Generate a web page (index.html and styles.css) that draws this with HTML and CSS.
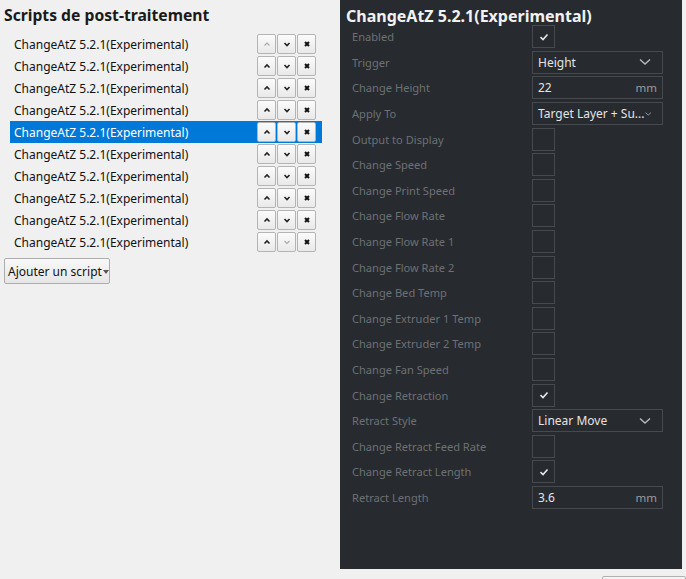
FILE: index.html
```html
<!DOCTYPE html>
<html>
<head>
<meta charset="utf-8">
<link rel="stylesheet" href="styles.css">
</head>
<body>
<div class="app">
  <section class="left">
    <h1 class="ltitle">Scripts de post-traitement</h1>
    <ul class="list">
      <li class="item"><span class="name">ChangeAtZ 5.2.1(Experimental)</span><span class="btns"><button class="b dis"><svg viewBox="0 0 10 10"><path d="M2.5 6.5 L5 4 L7.5 6.5"/></svg></button><button class="b"><svg viewBox="0 0 10 10"><path d="M2.5 4 L5 6.5 L7.5 4"/></svg></button><button class="b x"><svg viewBox="0 0 10 10"><path d="M3 3 L7 7 M7 3 L3 7"/></svg></button></span></li>
      <li class="item"><span class="name">ChangeAtZ 5.2.1(Experimental)</span><span class="btns"><button class="b"><svg viewBox="0 0 10 10"><path d="M2.5 6.5 L5 4 L7.5 6.5"/></svg></button><button class="b"><svg viewBox="0 0 10 10"><path d="M2.5 4 L5 6.5 L7.5 4"/></svg></button><button class="b x"><svg viewBox="0 0 10 10"><path d="M3 3 L7 7 M7 3 L3 7"/></svg></button></span></li>
      <li class="item"><span class="name">ChangeAtZ 5.2.1(Experimental)</span><span class="btns"><button class="b"><svg viewBox="0 0 10 10"><path d="M2.5 6.5 L5 4 L7.5 6.5"/></svg></button><button class="b"><svg viewBox="0 0 10 10"><path d="M2.5 4 L5 6.5 L7.5 4"/></svg></button><button class="b x"><svg viewBox="0 0 10 10"><path d="M3 3 L7 7 M7 3 L3 7"/></svg></button></span></li>
      <li class="item"><span class="name">ChangeAtZ 5.2.1(Experimental)</span><span class="btns"><button class="b"><svg viewBox="0 0 10 10"><path d="M2.5 6.5 L5 4 L7.5 6.5"/></svg></button><button class="b"><svg viewBox="0 0 10 10"><path d="M2.5 4 L5 6.5 L7.5 4"/></svg></button><button class="b x"><svg viewBox="0 0 10 10"><path d="M3 3 L7 7 M7 3 L3 7"/></svg></button></span></li>
      <li class="item sel"><span class="name">ChangeAtZ 5.2.1(Experimental)</span><span class="btns"><button class="b"><svg viewBox="0 0 10 10"><path d="M2.5 6.5 L5 4 L7.5 6.5"/></svg></button><button class="b"><svg viewBox="0 0 10 10"><path d="M2.5 4 L5 6.5 L7.5 4"/></svg></button><button class="b x"><svg viewBox="0 0 10 10"><path d="M3 3 L7 7 M7 3 L3 7"/></svg></button></span></li>
      <li class="item"><span class="name">ChangeAtZ 5.2.1(Experimental)</span><span class="btns"><button class="b"><svg viewBox="0 0 10 10"><path d="M2.5 6.5 L5 4 L7.5 6.5"/></svg></button><button class="b"><svg viewBox="0 0 10 10"><path d="M2.5 4 L5 6.5 L7.5 4"/></svg></button><button class="b x"><svg viewBox="0 0 10 10"><path d="M3 3 L7 7 M7 3 L3 7"/></svg></button></span></li>
      <li class="item"><span class="name">ChangeAtZ 5.2.1(Experimental)</span><span class="btns"><button class="b"><svg viewBox="0 0 10 10"><path d="M2.5 6.5 L5 4 L7.5 6.5"/></svg></button><button class="b"><svg viewBox="0 0 10 10"><path d="M2.5 4 L5 6.5 L7.5 4"/></svg></button><button class="b x"><svg viewBox="0 0 10 10"><path d="M3 3 L7 7 M7 3 L3 7"/></svg></button></span></li>
      <li class="item"><span class="name">ChangeAtZ 5.2.1(Experimental)</span><span class="btns"><button class="b"><svg viewBox="0 0 10 10"><path d="M2.5 6.5 L5 4 L7.5 6.5"/></svg></button><button class="b"><svg viewBox="0 0 10 10"><path d="M2.5 4 L5 6.5 L7.5 4"/></svg></button><button class="b x"><svg viewBox="0 0 10 10"><path d="M3 3 L7 7 M7 3 L3 7"/></svg></button></span></li>
      <li class="item"><span class="name">ChangeAtZ 5.2.1(Experimental)</span><span class="btns"><button class="b"><svg viewBox="0 0 10 10"><path d="M2.5 6.5 L5 4 L7.5 6.5"/></svg></button><button class="b"><svg viewBox="0 0 10 10"><path d="M2.5 4 L5 6.5 L7.5 4"/></svg></button><button class="b x"><svg viewBox="0 0 10 10"><path d="M3 3 L7 7 M7 3 L3 7"/></svg></button></span></li>
      <li class="item"><span class="name">ChangeAtZ 5.2.1(Experimental)</span><span class="btns"><button class="b"><svg viewBox="0 0 10 10"><path d="M2.5 6.5 L5 4 L7.5 6.5"/></svg></button><button class="b dis"><svg viewBox="0 0 10 10"><path d="M2.5 4 L5 6.5 L7.5 4"/></svg></button><button class="b x"><svg viewBox="0 0 10 10"><path d="M3 3 L7 7 M7 3 L3 7"/></svg></button></span></li>
    </ul>
    <button class="add">Ajouter un script<span class="tri"></span></button>
  </section>
  <section class="right">
    <h2 class="rtitle">ChangeAtZ 5.2.1(Experimental)</h2>
    <div class="settings">
      <div class="row"><span class="lbl">Enabled</span><span class="cb on"><svg viewBox="0 0 12 12"><path d="M2.5 6.2 L5 8.5 L9.5 3.5"/></svg></span></div>
      <div class="row"><span class="lbl">Trigger</span><span class="dd"><span class="val">Height</span><svg class="chev" viewBox="0 0 12 8"><path d="M1 1.5 L6 6 L11 1.5"/></svg></span></div>
      <div class="row"><span class="lbl">Change Height</span><span class="dd"><span class="val">22</span><span class="unit">mm</span></span></div>
      <div class="row"><span class="lbl">Apply To</span><span class="dd"><span class="val">Target Layer + Su...</span><svg class="chev" viewBox="0 0 12 8"><path d="M1 1.5 L6 6 L11 1.5"/></svg></span></div>
      <div class="row"><span class="lbl">Output to Display</span><span class="cb"></span></div>
      <div class="row"><span class="lbl">Change Speed</span><span class="cb"></span></div>
      <div class="row"><span class="lbl">Change Print Speed</span><span class="cb"></span></div>
      <div class="row"><span class="lbl">Change Flow Rate</span><span class="cb"></span></div>
      <div class="row"><span class="lbl">Change Flow Rate 1</span><span class="cb"></span></div>
      <div class="row"><span class="lbl">Change Flow Rate 2</span><span class="cb"></span></div>
      <div class="row"><span class="lbl">Change Bed Temp</span><span class="cb"></span></div>
      <div class="row"><span class="lbl">Change Extruder 1 Temp</span><span class="cb"></span></div>
      <div class="row"><span class="lbl">Change Extruder 2 Temp</span><span class="cb"></span></div>
      <div class="row"><span class="lbl">Change Fan Speed</span><span class="cb"></span></div>
      <div class="row"><span class="lbl">Change Retraction</span><span class="cb on"><svg viewBox="0 0 12 12"><path d="M2.5 6.2 L5 8.5 L9.5 3.5"/></svg></span></div>
      <div class="row"><span class="lbl">Retract Style</span><span class="dd"><span class="val">Linear Move</span><svg class="chev" viewBox="0 0 12 8"><path d="M1 1.5 L6 6 L11 1.5"/></svg></span></div>
      <div class="row"><span class="lbl">Change Retract Feed Rate</span><span class="cb"></span></div>
      <div class="row"><span class="lbl">Change Retract Length</span><span class="cb on"><svg viewBox="0 0 12 12"><path d="M2.5 6.2 L5 8.5 L9.5 3.5"/></svg></span></div>
      <div class="row"><span class="lbl">Retract Length</span><span class="dd"><span class="val">3.6</span><span class="unit">mm</span></span></div>
    </div>
  </section>
</div>
<div class="foot"><span class="fbtn"></span></div>
</body>
</html>
```
FILE: styles.css
```css
* { box-sizing: border-box; }
html, body { margin: 0; padding: 0; }
body {
  background: #f0f0f0;
  font-family: "Noto Sans", "Open Sans", sans-serif;
  width: 686px;
  height: 579px;
  overflow: hidden;
}
.app {
  display: flex;
  height: 569px;
}
.left {
  width: 340px;
  flex: none;
  display: flex;
  flex-direction: column;
  align-items: flex-start;
}
.ltitle {
  margin: 0;
  padding: 4px 0 0 4px;
  height: 33px;
  font-size: 15.7px;
  font-weight: 700;
  color: #1a1a1a;
  line-height: 22px;
}
.list {
  list-style: none;
  margin: 0;
  padding: 0 0 0 10px;
  width: 322px;
}
.item {
  height: 22px;
  display: flex;
  align-items: center;
  justify-content: space-between;
  padding: 0 6px 0 4px;
  font-size: 12px;
  color: #111;
}
.item.sel {
  background: #0078d7;
  color: #fff;
}
.btns {
  display: flex;
  gap: 1px;
}
.b {
  width: 19px;
  height: 20px;
  padding: 0;
  margin: 0;
  border: 1px solid #b4b4b4;
  border-radius: 2px;
  background: linear-gradient(#fbfbfb, #e9e9e9);
  display: flex;
  align-items: center;
  justify-content: center;
}
.b svg {
  width: 10px;
  height: 10px;
  fill: none;
  stroke: #222;
  stroke-width: 1.6;
}
.b.x svg { stroke-width: 2; stroke: #111; }
.b.dis svg { stroke: #a8a8a8; stroke-width: 1.1; }
.add {
  margin: 5px 0 0 4px;
  width: 106px;
  height: 26px;
  border: 1px solid #adadad;
  border-radius: 2px;
  background: linear-gradient(#f8f8f8, #e6e6e6);
  font-family: "Noto Sans", "Open Sans", sans-serif;
  font-size: 12px;
  color: #111;
  padding: 0 0 0 3px;
  display: flex;
  align-items: center;
  white-space: nowrap;
}
.tri {
  display: inline-block;
  width: 0;
  height: 0;
  border-left: 3.5px solid transparent;
  border-right: 3.5px solid transparent;
  border-top: 4px solid #555;
  margin-left: 1px;
  margin-top: 2px;
}
.right {
  width: 342px;
  flex: none;
  background: #272a2e;
  padding: 6px 0 0 0;
}
.rtitle {
  margin: 0 0 0 6px;
  font-size: 16px;
  font-weight: 700;
  color: #f2f2f2;
  line-height: 20px;
  height: 18px;
}
.settings {
  display: flex;
  flex-direction: column;
  padding-left: 12px;
}
.row {
  height: 25.6px;
  display: flex;
  align-items: center;
}
.lbl {
  width: 180px;
  font-size: 11.1px;
  color: #6d7175;
}
.cb {
  width: 23px;
  height: 23px;
  border: 1px solid #46494d;
  display: flex;
  align-items: center;
  justify-content: center;
}
.cb svg {
  width: 12px;
  height: 12px;
  fill: none;
  stroke: #e8e8e8;
  stroke-width: 1.6;
}
.dd {
  width: 131px;
  height: 23px;
  border: 1px solid #46494d;
  display: flex;
  align-items: center;
  justify-content: space-between;
  padding: 0 5px 0 5px;
  font-size: 12px;
  color: #e4e4e4;
}
.val { white-space: nowrap; }
.unit { color: #9a9c9e; font-size: 11.5px; }
.chev {
  width: 12px;
  height: 8px;
  fill: none;
  stroke: #b8babc;
  stroke-width: 1.4;
  margin-right: 6px;
}
.foot {
  height: 10px;
  position: relative;
}
.fbtn {
  position: absolute;
  left: 602px;
  top: 7px;
  width: 84px;
  height: 10px;
  border: 1px solid #b0b0b0;
  border-radius: 2px;
  background: #f4f4f4;
}
```
